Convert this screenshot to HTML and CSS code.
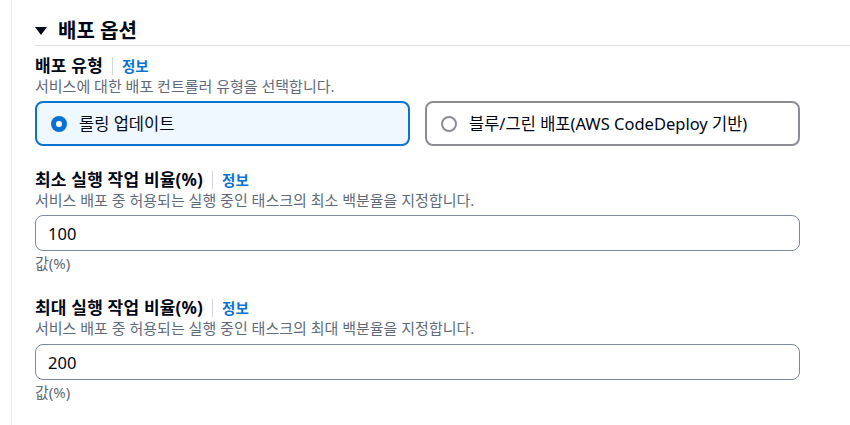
FILE: index.html
```html
<!DOCTYPE html>
<html lang="ko">
<head>
<meta charset="utf-8">
<link rel="stylesheet" href="styles.css">
</head>
<body>
<div class="frame">
  <div class="inner">
    <h2 class="section-title"><span class="caret"></span>배포 옵션</h2>

    <div class="field first">
      <div class="label-row"><span class="label">배포 유형</span><span class="sep"></span><a class="info">정보</a></div>
      <div class="desc">서비스에 대한 배포 컨트롤러 유형을 선택합니다.</div>
      <div class="tiles">
        <div class="tile selected"><span class="radio on"></span><span>롤링 업데이트</span></div>
        <div class="tile"><span class="radio"></span><span>블루/그린 배포(AWS CodeDeploy 기반)</span></div>
      </div>
    </div>

    <div class="field gap1">
      <div class="label-row"><span class="label">최소 실행 작업 비율(%)</span><span class="sep"></span><a class="info">정보</a></div>
      <div class="desc">서비스 배포 중 허용되는 실행 중인 태스크의 최소 백분율을 지정합니다.</div>
      <div class="input">100</div>
      <div class="hint">값(%)</div>
    </div>

    <div class="field gap2">
      <div class="label-row"><span class="label">최대 실행 작업 비율(%)</span><span class="sep"></span><a class="info">정보</a></div>
      <div class="desc">서비스 배포 중 허용되는 실행 중인 태스크의 최대 백분율을 지정합니다.</div>
      <div class="input lower">200</div>
      <div class="hint">값(%)</div>
    </div>
  </div>
</div>
</body>
</html>
```
FILE: styles.css
```css
* { box-sizing: border-box; }
html, body { margin: 0; padding: 0; background: #ffffff; }
body {
  font-family: "Noto Sans", "Noto Sans CJK KR", sans-serif;
  color: #000716;
  width: 850px;
  height: 425px;
  overflow: hidden;
}
.frame {
  margin-left: 11px;
  border-left: 1px solid #e9ebed;
  height: 425px;
}
.inner {
  padding-left: 23px;
}
.section-title {
  margin: 0;
  padding-top: 19px;
  padding-bottom: 3px;
  font-size: 20px;
  line-height: 23px;
  font-weight: 700;
  border-bottom: 1px solid #dcdee0;
  display: flex;
  align-items: center;
}
.caret {
  width: 0;
  height: 0;
  border-left: 6px solid transparent;
  border-right: 6px solid transparent;
  border-top: 8px solid #000716;
  margin-right: 11px;
  margin-top: 1px;
}
.field { width: 765px; }
.first { margin-top: 10px; }
.gap1 { margin-top: 24px; }
.gap2 { margin-top: 26px; }
.label-row {
  display: flex;
  align-items: center;
  height: 20px;
}
.label {
  font-size: 17px;
  font-weight: 700;
  line-height: 20px;
  letter-spacing: 0.2px;
}
.sep {
  width: 1px;
  height: 18px;
  background: #d1d5db;
  margin: 0 9px 0 9px;
}
.info {
  font-size: 14.5px;
  font-weight: 700;
  color: #0972d3;
  line-height: 20px;
}
.desc {
  margin-top: 1px;
  font-size: 15px;
  line-height: 18px;
  color: #5f6b7a;
}
.tiles {
  margin-top: 6px;
  display: grid;
  grid-template-columns: 375px 375px;
  column-gap: 15px;
}
.tile {
  height: 45px;
  border: 2px solid #8c8c94;
  border-radius: 8px;
  display: flex;
  align-items: center;
  padding-left: 14px;
  font-size: 16.5px;
  line-height: 20px;
}
.tile.selected {
  border-color: #0972d3;
  background: #f0f8ff;
}
.radio {
  width: 16px;
  height: 16px;
  border-radius: 50%;
  border: 2px solid #8c8c94;
  background: #fff;
  margin-right: 12px;
  flex: none;
}
.radio.on {
  border: 5px solid #0972d3;
}
.input {
  margin-top: 6px;
  height: 36px;
  border: 1.5px solid #7d8998;
  border-radius: 8px;
  padding-left: 12px;
  display: flex;
  align-items: center;
  font-size: 16.5px;
}
.input.lower { margin-top: 7px; }
.hint {
  margin-top: 3px;
  font-size: 15px;
  line-height: 18px;
  color: #5f6b7a;
}
```
